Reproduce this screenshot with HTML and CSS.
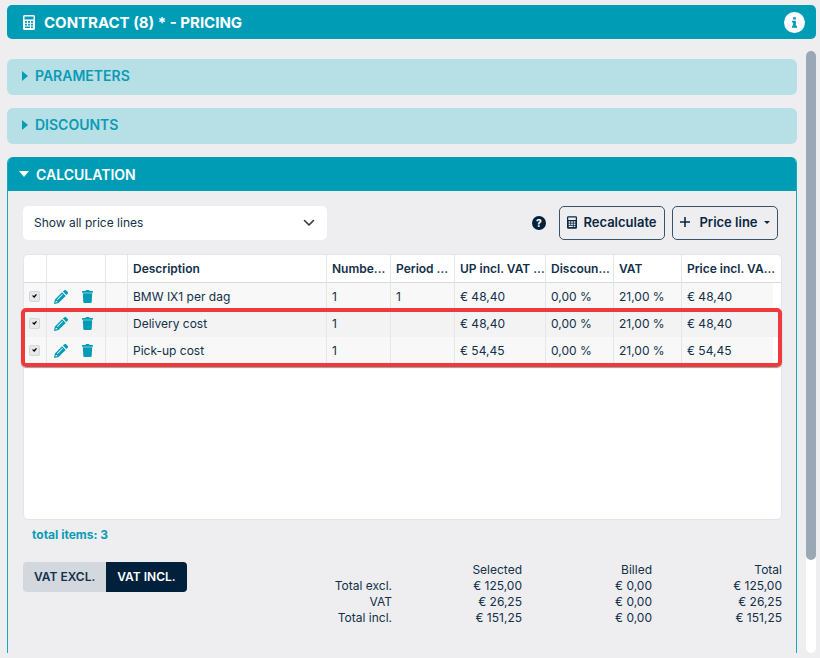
FILE: index.html
```html
<!DOCTYPE html>
<html lang="en">
    <head>
        <meta charset="UTF-8" />
        <meta name="viewport" content="width=device-width, initial-scale=1.0" />
        <title>Contract - Pricing</title>
        <link rel="stylesheet" href="styles.css">
    </head>
    <body>
        <!-- shared icons -->
        <svg class="sprite" aria-hidden="true">
            <symbol id="calculator" viewBox="0 0 12 15">
                <path fill="currentColor" fill-rule="evenodd" d="M1.500 0h9A1.500 1.500 0 0 1 12 1.500v12a1.500 1.500 0 0 1-1.500 1.500h-9A1.500 1.500 0 0 1 0 13.500v-12A1.500 1.500 0 0 1 1.500 0zM1.500 1.500v3h9v-3zM2 6v1.700h2V6zm3 0v1.700h2V6zm3 0v1.700h2V6zM2 8.700v1.700h2V8.700zm3 0v1.700h2V8.700zm3 0v1.700h2V8.700zM2 11.500v1.500h5v-1.500zm6 0v1.500h2v-1.500z" />
            </symbol>
            <symbol id="pencil" viewBox="0 0 14 14">
                <path fill="currentColor" fill-rule="evenodd" d="M8.100 2.300l3.600 3.600-7.200 7.200L.5 13.900a.4.400 0 0 1-.4-.4l.8-4zM8.300 4L3 9.300l.6.600L8.900 4.600zM1.900 10.700l-.5 1.900 1.900-.5-.2-1-1-.2zM8.900 1.600L10.100.5a1.500 1.500 0 0 1 2.200 0l1.200 1.200a1.500 1.500 0 0 1 0 2.200l-1.200 1.200z" />
            </symbol>
            <symbol id="trash" viewBox="0 0 12 14">
                <path fill="currentColor" d="M.5 1h3.200l.5-.8A.5.500 0 0 1 4.700 0h2.600a.5.500 0 0 1 .5.200l.5.800h3.200a.5.500 0 0 1 .5.500v.8a.5.500 0 0 1-.5.500H.5a.5.500 0 0 1-.5-.5v-.8A.5.500 0 0 1 .5 1zM.9 3.400h10.200l-.5 9.300a1.400 1.400 0 0 1-1.400 1.300H2.800a1.400 1.400 0 0 1-1.400-1.300z" />
            </symbol>
        </svg>

        <header class="title-bar">
            <svg class="title-icon"><use href="#calculator" /></svg>
            <h1>CONTRACT (8) * - PRICING</h1>
            <button type="button" class="info" aria-label="Info">
                <svg viewBox="0 0 20 20">
                    <circle cx="10" cy="10" r="10" fill="#fff" />
                    <path fill="#009cb6" d="M8.700 5h2.600v2.200H8.700zM7.600 8.300h3.700v4.900h1.100V15H7.600v-1.800h1.100v-3.100H7.600z" />
                </svg>
            </button>
        </header>

        <div class="scroll-area">
            <main class="panels">
                <button type="button" class="panel-closed">
                    <span class="arrow-right"></span>PARAMETERS
                </button>
                <button type="button" class="panel-closed">
                    <span class="arrow-right"></span>DISCOUNTS
                </button>

                <section class="panel-open">
                    <button type="button" class="panel-head">
                        <span class="arrow-down"></span>CALCULATION
                    </button>
                    <div class="panel-body">
                        <div class="toolbar">
                            <div class="filter">
                                <select aria-label="Price lines">
                                    <option>Show all price lines</option>
                                </select>
                                <svg class="chevron" viewBox="0 0 12 8">
                                    <path d="M1.500 1.500L6 6l4.500-4.500" fill="none" stroke="#33393f" stroke-width="1.600" stroke-linecap="round" stroke-linejoin="round" />
                                </svg>
                            </div>
                            <button type="button" class="help" aria-label="Help">?</button>
                            <button type="button" class="tool-button">
                                <svg class="calc-icon"><use href="#calculator" /></svg>
                                Recalculate
                            </button>
                            <button type="button" class="tool-button">
                                <svg class="plus-icon" viewBox="0 0 10 10">
                                    <path d="M5 0v10M0 5h10" stroke="currentColor" stroke-width="1.600" />
                                </svg>
                                Price line
                                <span class="caret"></span>
                            </button>
                        </div>

                        <div class="grid">
                            <table class="lines">
                                <colgroup>
                                    <col class="col-check" />
                                    <col class="col-actions" />
                                    <col class="col-empty" />
                                    <col />
                                    <col class="col-small" />
                                    <col class="col-small" />
                                    <col class="col-price" />
                                    <col class="col-vat" />
                                    <col class="col-vat" />
                                    <col class="col-price" />
                                    <col class="col-gutter" />
                                </colgroup>
                                <thead>
                                    <tr>
                                        <th></th>
                                        <th></th>
                                        <th></th>
                                        <th>Description</th>
                                        <th>Numbe...</th>
                                        <th>Period ...</th>
                                        <th>UP incl. VAT ...</th>
                                        <th>Discoun...</th>
                                        <th>VAT</th>
                                        <th colspan="2" class="last">Price incl. VA...</th>
                                    </tr>
                                </thead>
                                <tbody>
                                    <tr>
                                        <td class="check"><input type="checkbox" aria-label="Select BMW IX1 per dag" checked /></td>
                                        <td>
                                            <div class="actions">
                                                <button type="button" aria-label="Edit"><svg class="pencil"><use href="#pencil" /></svg></button>
                                                <button type="button" aria-label="Delete"><svg class="trash"><use href="#trash" /></svg></button>
                                            </div>
                                        </td>
                                        <td></td>
                                        <td>BMW IX1 per dag</td>
                                        <td>1</td>
                                        <td>1</td>
                                        <td>€ 48,40</td>
                                        <td>0,00 %</td>
                                        <td>21,00 %</td>
                                        <td class="last">€ 48,40</td>
                                        <td class="gutter"></td>
                                    </tr>
                                    <tr>
                                        <td class="check"><input type="checkbox" aria-label="Select Delivery cost" checked /></td>
                                        <td>
                                            <div class="actions">
                                                <button type="button" aria-label="Edit"><svg class="pencil"><use href="#pencil" /></svg></button>
                                                <button type="button" aria-label="Delete"><svg class="trash"><use href="#trash" /></svg></button>
                                            </div>
                                        </td>
                                        <td></td>
                                        <td>Delivery cost</td>
                                        <td>1</td>
                                        <td></td>
                                        <td>€ 48,40</td>
                                        <td>0,00 %</td>
                                        <td>21,00 %</td>
                                        <td class="last">€ 48,40</td>
                                        <td class="gutter"></td>
                                    </tr>
                                    <tr>
                                        <td class="check"><input type="checkbox" aria-label="Select Pick-up cost" checked /></td>
                                        <td>
                                            <div class="actions">
                                                <button type="button" aria-label="Edit"><svg class="pencil"><use href="#pencil" /></svg></button>
                                                <button type="button" aria-label="Delete"><svg class="trash"><use href="#trash" /></svg></button>
                                            </div>
                                        </td>
                                        <td></td>
                                        <td>Pick-up cost</td>
                                        <td>1</td>
                                        <td></td>
                                        <td>€ 54,45</td>
                                        <td>0,00 %</td>
                                        <td>21,00 %</td>
                                        <td class="last">€ 54,45</td>
                                        <td class="gutter"></td>
                                    </tr>
                                </tbody>
                            </table>
                            <div class="highlight"></div>
                        </div>

                        <p class="total-items">total items: 3</p>

                        <div class="summary">
                            <div class="vat-switch">
                                <button type="button">VAT EXCL.</button>
                                <button type="button" class="active">VAT INCL.</button>
                            </div>
                            <table class="totals">
                                <tr>
                                    <td></td>
                                    <th>Selected</th>
                                    <th>Billed</th>
                                    <th>Total</th>
                                </tr>
                                <tr>
                                    <th>Total excl.</th>
                                    <td>€ 125,00</td>
                                    <td>€ 0,00</td>
                                    <td>€ 125,00</td>
                                </tr>
                                <tr>
                                    <th>VAT</th>
                                    <td>€ 26,25</td>
                                    <td>€ 0,00</td>
                                    <td>€ 26,25</td>
                                </tr>
                                <tr>
                                    <th>Total incl.</th>
                                    <td>€ 151,25</td>
                                    <td>€ 0,00</td>
                                    <td>€ 151,25</td>
                                </tr>
                            </table>
                        </div>
                    </div>
                </section>
            </main>
            <div class="scrollbar"><div class="thumb"></div></div>
        </div>
    </body>
</html>
```

FILE: styles.css
```css
* {
    box-sizing: border-box;
}
body {
    display: flex;
    flex-direction: column;
    gap: 12px;
    min-height: 100vh;
    margin: 0;
    padding: 5px 4px 5px 7px;
    background-color: #eeeef0;
    color: #12304a;
    font-family: Inter, sans-serif;
    font-size: 12px;
}
button {
    border: none;
    background: none;
    padding: 0;
    color: inherit;
    font: inherit;
    cursor: pointer;
}
svg {
    display: block;
}
.sprite {
    display: none;
}

.title-bar {
    display: flex;
    align-items: center;
    gap: 9px;
    height: 34px;
    padding: 0 11px 0 16px;
    border-radius: 5px;
    background-color: #009cb6;
    color: white;
}
.title-bar h1 {
    flex: 1;
    margin: 0;
    font-size: 15px;
    font-weight: 700;
}
.title-icon {
    width: 12px;
    height: 15px;
}
.info svg {
    width: 21px;
    height: 21px;
}

.scroll-area {
    display: flex;
    flex: 1;
    gap: 9px;
}
.panels {
    display: flex;
    flex: 1;
    flex-direction: column;
    gap: 13px;
    min-width: 0;
    padding-top: 8px;
}
.scrollbar {
    width: 10px;
    border-radius: 5px;
    background-color: white;
}
.thumb {
    height: 509px;
    border-radius: 5px;
    background-color: #9aa7b4;
}

.panel-closed,
.panel-head {
    display: flex;
    align-items: center;
    font-size: 14px;
    font-weight: 600;
    text-align: left;
}
.panel-closed {
    height: 36px;
    padding: 0 15px 3px;
    border-radius: 6px;
    background-color: #b6dfe6;
    color: #0b9bb5;
}
.panel-head {
    width: 100%;
    height: 34px;
    padding: 0 11px;
    background-color: #009cb6;
    color: white;
}
.arrow-right {
    margin-right: 7px;
    border-top: 5px solid transparent;
    border-bottom: 5px solid transparent;
    border-left: 6px solid #0b9bb5;
}
.arrow-down {
    margin-right: 7px;
    border-top: 6px solid white;
    border-left: 5px solid transparent;
    border-right: 5px solid transparent;
}
.panel-open {
    flex: 1;
    border: 1px solid #1ba5bd;
    border-top: none;
    border-bottom: none;
    border-radius: 6px 6px 0 0;
    overflow: hidden;
}
.panel-body {
    padding: 15px;
    padding-right: 14px;
}

.toolbar {
    display: flex;
    align-items: center;
    gap: 7px;
    margin-bottom: 14px;
    padding-right: 4px;
}
.filter {
    position: relative;
    width: 304px;
    margin-right: auto;
}
.filter select {
    width: 100%;
    height: 34px;
    padding: 0 11px 2px;
    border: none;
    border-radius: 5px;
    background-color: white;
    color: #12304a;
    font: inherit;
    appearance: none;
}
.chevron {
    position: absolute;
    top: 13px;
    right: 12px;
    width: 12px;
    height: 8px;
    pointer-events: none;
}
.help {
    width: 14px;
    height: 14px;
    margin-right: 6px;
    border-radius: 50%;
    background-color: #00203c;
    color: white;
    font-size: 10px;
    font-weight: 800;
    line-height: 14px;
}
.tool-button {
    display: flex;
    align-items: center;
    justify-content: center;
    gap: 6px;
    width: 106px;
    height: 34px;
    padding-bottom: 2px;
    border: 1px solid #36536a;
    border-radius: 5px;
    color: #0b2742;
    font-size: 13px;
    font-weight: 600;
}
.calc-icon {
    width: 10px;
    height: 13px;
}
.plus-icon {
    width: 10px;
    height: 10px;
    margin-right: 3px;
}
.caret {
    border-top: 3px solid #0b2742;
    border-left: 3px solid transparent;
    border-right: 3px solid transparent;
}

.grid {
    position: relative;
    height: 266px;
    border: 1px solid #e3e5ea;
    border-radius: 5px;
    background-color: white;
}
.lines {
    width: 100%;
    border-collapse: separate;
    border-spacing: 0;
    table-layout: fixed;
}
.col-check {
    width: 23px;
}
.col-actions {
    width: 59px;
}
.col-empty {
    width: 22px;
}
.col-small {
    width: 64px;
}
.col-price {
    width: 91px;
}
.col-vat {
    width: 68px;
}
.col-gutter {
    width: 8px;
}
.lines th,
.lines td {
    height: 27px;
    padding: 0 0 0 5px;
    border-right: 1px solid #e3e7eb;
    text-align: left;
    white-space: nowrap;
}
.lines th {
    height: 28px;
    border-bottom: 1px solid #d5dade;
    font-weight: 600;
}
.lines td {
    background-color: #f8f8f8;
}
.lines tr:nth-child(even) td {
    background-color: #f3f3f3;
}
.lines .last,
.lines .gutter {
    border-right: none;
}
.lines tbody .gutter {
    background-color: white;
}
.check input {
    display: block;
    position: relative;
    width: 11px;
    height: 11px;
    margin: 0;
    border: 1px solid #d3d7db;
    border-radius: 2px;
    background-color: #e6e8ea;
    appearance: none;
}
.check input:checked::before {
    content: "";
    position: absolute;
    top: 2px;
    left: 2px;
    width: 5px;
    height: 4px;
    background-color: black;
    clip-path: polygon(0 45%, 25% 30%, 40% 50%, 80% 0, 100% 20%, 45% 100%);
}
.actions {
    display: flex;
    align-items: center;
    gap: 14px;
    padding-left: 2px;
    color: #009cb6;
}
.pencil {
    width: 14px;
    height: 14px;
}
.trash {
    width: 11px;
    height: 13px;
}

/* red frame around the extra cost lines */
.highlight {
    position: absolute;
    top: 53px;
    right: -1px;
    left: -3px;
    height: 59px;
    border: 4px solid #ee3a3c;
    border-radius: 5px;
    box-shadow: 0 1px 1px #9a9a9a;
    pointer-events: none;
}

.total-items {
    margin: 7px 9px 19px;
    color: #0b9bb5;
    font-weight: 700;
    line-height: 16px;
}
.summary {
    display: flex;
    align-items: flex-start;
    justify-content: space-between;
}
.vat-switch {
    display: flex;
    border-radius: 4px;
    background-color: #d2d8dd;
    overflow: hidden;
}
.vat-switch button {
    height: 30px;
    padding: 0 11px 2px;
    color: #12304a;
    font-weight: 600;
}
.vat-switch .active {
    background-color: #00203c;
    color: white;
}
.totals {
    width: 520px;
    border-collapse: collapse;
    table-layout: fixed;
}
.totals th,
.totals td {
    height: 16px;
    padding: 0;
    font-weight: 400;
    line-height: 16px;
    text-align: right;
}
```
